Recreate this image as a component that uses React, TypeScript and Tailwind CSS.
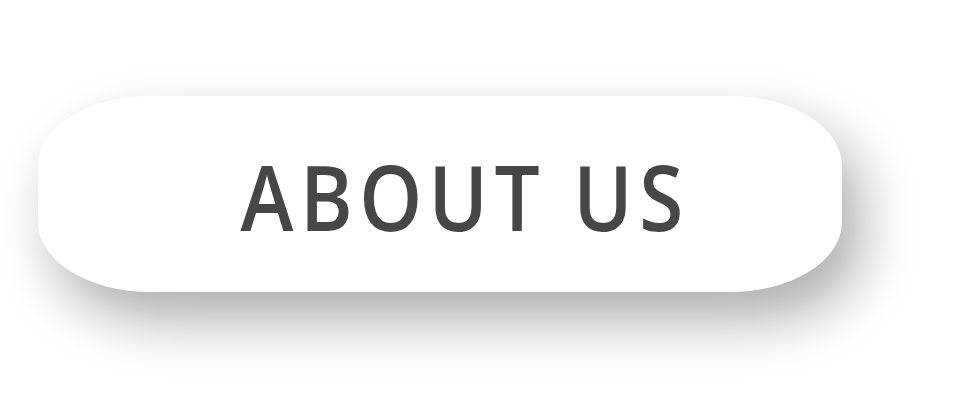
export default function App() {
  return (
    <div className="min-h-[403px] w-[965px] bg-white pl-[38px] pt-[96px]">
      <button
        type="button"
        className="flex h-[196px] w-[804px] items-center justify-center rounded-[112px/70px] bg-white pl-[50px] shadow-[18px_28px_55px_rgba(0,0,0,0.32)]"
      >
        <span className="scale-x-[0.88] pt-[4px] font-['Open_Sans',sans-serif] text-[91px] font-semibold leading-none tracking-[0.08em] text-[#474747]">
          ABOUT US
        </span>
      </button>
    </div>
  );
}
